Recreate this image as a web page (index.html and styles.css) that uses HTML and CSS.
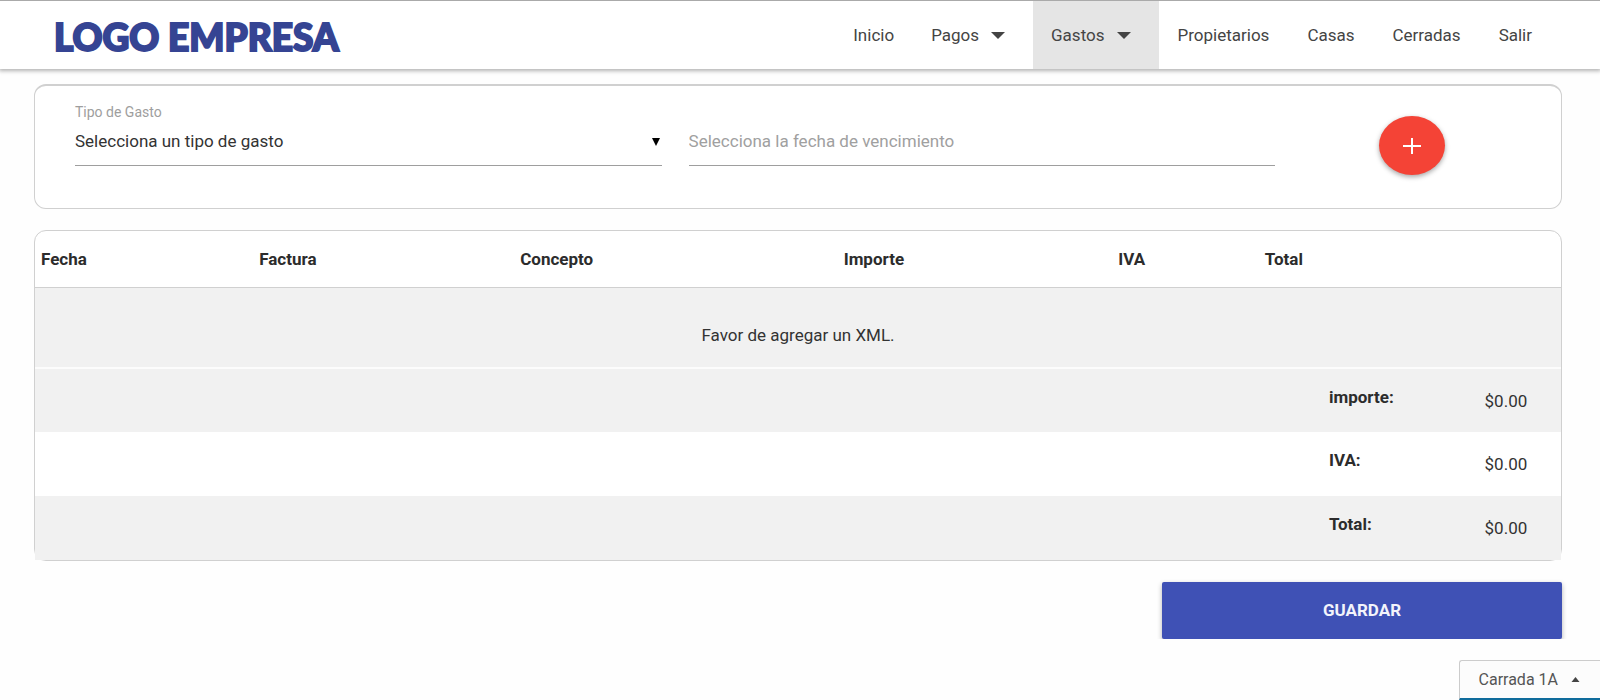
FILE: index.html
```html
<!DOCTYPE html>
<html lang="es">
<head>
<meta charset="utf-8">
<title>Gastos</title>
<link rel="stylesheet" href="styles.css">
</head>
<body>
<header class="navbar">
  <a class="brand" href="#">LOGO EMPRESA</a>
  <nav class="menu">
    <a class="menu-item" href="#">Inicio</a>
    <a class="menu-item dropdown" href="#">Pagos <svg class="caret" viewBox="0 0 14 7"><path d="M0 0h14L7 7z"/></svg></a>
    <a class="menu-item dropdown active" href="#">Gastos <svg class="caret" viewBox="0 0 14 7"><path d="M0 0h14L7 7z"/></svg></a>
    <a class="menu-item" href="#">Propietarios</a>
    <a class="menu-item" href="#">Casas</a>
    <a class="menu-item" href="#">Cerradas</a>
    <a class="menu-item" href="#">Salir</a>
  </nav>
</header>
<main class="content">
  <form class="card filters">
    <div class="field">
      <label class="field-label" for="tipo">Tipo de Gasto</label>
      <div class="select-wrap">
        <select class="control" id="tipo"><option>Selecciona un tipo de gasto</option></select>
        <svg class="select-arrow" viewBox="0 0 8 8"><path d="M0 0h8L4 8z"/></svg>
      </div>
    </div>
    <div class="field">
      <span class="field-label"></span>
      <input class="control" type="text" aria-label="Fecha de vencimiento" placeholder="Selecciona la fecha de vencimiento">
    </div>
    <div class="add">
      <button class="fab" type="button" aria-label="Agregar"><svg class="plus" viewBox="0 0 18 16"><path d="M9 0v16M0 8h18"/></svg></button>
    </div>
  </form>
  <section class="card">
    <table class="expenses">
      <colgroup><col class="c-fecha"><col class="c-factura"><col class="c-concepto"><col class="c-importe"><col class="c-iva"><col class="c-total"><col class="c-label"><col class="c-value"></colgroup>
      <thead>
        <tr><th>Fecha</th><th>Factura</th><th>Concepto</th><th>Importe</th><th>IVA</th><th>Total</th><th></th><th></th></tr>
      </thead>
      <tbody>
        <tr class="empty"><td colspan="8">Favor de agregar un XML.</td></tr>
      </tbody>
      <tfoot>
        <tr class="shade"><td colspan="6"></td><th>importe:</th><td>$0.00</td></tr>
        <tr><td colspan="6"></td><th>IVA:</th><td>$0.00</td></tr>
        <tr class="shade"><td colspan="6"></td><th>Total:</th><td>$0.00</td></tr>
      </tfoot>
    </table>
  </section>
  <div class="actions"><button class="save" type="button">GUARDAR</button></div>
</main>
<button class="dock" type="button">Carrada 1A <svg class="dock-caret" viewBox="0 0 8 5"><path d="M0 5h8L4 0z"/></svg></button>
</body>
</html>
```
FILE: styles.css
```css
* { box-sizing: border-box; }
body {
  margin: 0;
  background: #fefefe;
  color: #333;
  font: 17px/24px Roboto, "Liberation Sans", sans-serif;
}
button, input, select { font: inherit; color: inherit; }
.navbar {
  display: flex;
  align-items: stretch;
  justify-content: space-between;
  height: 69px;
  padding: 0 49px 0 54px;
  background: #fff;
  border-top: 1px solid #aaa;
  box-shadow: 0 1px 4px 1px rgba(0, 0, 0, .3);
}
.brand {
  align-self: center;
  padding-top: 4px;
  color: #354493;
  font: 900 37px/46px Lato, sans-serif;
  -webkit-text-stroke: 2px #354493;
  text-decoration: none;
}
.menu { display: flex; }
.menu-item {
  display: flex;
  align-items: center;
  padding: 0 19px;
  color: #444;
  text-decoration: none;
}
.menu-item.dropdown { padding: 0 18px; }
.menu-item.active { background: #e5e5e5; }
.caret {
  width: 14px;
  height: 7px;
  margin: 0 10px 0 12px;
  fill: #444;
}
.content {
  display: flex;
  flex-direction: column;
  gap: 21px;
  padding: 15px 38px 0 34px;
}
.card {
  background: #fff;
  border: 1px solid #d0d0d0;
  border-radius: 12px;
}
.filters {
  display: flex;
  gap: 27px;
  padding: 16px 0 0 40px;
  border-top-width: 2px;
}
.field { flex: 587; }
.add {
  display: flex;
  flex: 219;
  justify-content: center;
  align-items: flex-start;
  padding: 14px 40px 33px 0;
}
.field-label {
  display: block;
  height: 20px;
  color: #9e9e9e;
  font-size: 14px;
  line-height: 20px;
}
.select-wrap { position: relative; }
.control {
  display: block;
  width: 100%;
  height: 44px;
  padding: 0 0 6px;
  appearance: none;
  background: transparent;
  border: 0;
  border-bottom: 1px solid #9e9e9e;
  border-radius: 0;
  outline: 0;
}
.control::placeholder { color: #a0a0a0; opacity: 1; }
.select-arrow {
  position: absolute;
  top: 16px;
  right: 2px;
  width: 8px;
  height: 8px;
}
.fab {
  display: flex;
  align-items: center;
  justify-content: center;
  width: 66px;
  height: 59px;
  border: 0;
  border-radius: 50%;
  background: #f44336;
  box-shadow: 0 2px 5px rgba(0, 0, 0, .35);
}
.plus {
  width: 18px;
  height: 16px;
  fill: none;
  stroke: #fff;
  stroke-width: 2;
}
.expenses {
  width: 100%;
  table-layout: fixed;
  border-collapse: collapse;
}
.c-fecha { width: 14.3%; }
.c-factura { width: 17.1%; }
.c-concepto { width: 21.2%; }
.c-importe { width: 18%; }
.c-iva { width: 9.6%; }
.c-total { width: 4.2%; }
.c-label { width: 10.2%; }
.c-value { width: 5.4%; }
th, td {
  padding: 0 6px;
  text-align: left;
  white-space: nowrap;
}
th { font-weight: 700; color: #2c2c2c; }
thead th {
  height: 56px;
  border-bottom: 1px solid #d0d0d0;
}
.empty td {
  height: 81px;
  padding-top: 16px;
  background: #f1f1f1;
  border-bottom: 2px solid #fcfcfc;
  text-align: center;
}
tfoot th, tfoot td { height: 64px; }
tfoot th { padding-bottom: 8px; }
.shade { background: #f1f1f1; }
.actions { display: flex; justify-content: flex-end; }
.save {
  width: 400px;
  height: 57px;
  padding-bottom: 3px;
  border: 0;
  border-radius: 2px;
  background: #3f51b5;
  color: #f3f4fb;
  font-weight: 700;
  box-shadow: 0 2px 5px rgba(0, 0, 0, .3);
}
.dock {
  position: fixed;
  right: 0;
  bottom: 0;
  display: flex;
  align-items: center;
  gap: 13px;
  height: 40px;
  padding: 0 20px 0 19px;
  background: #fcfcfc;
  border: 1px solid #ccc;
  border-right: 0;
  border-bottom: 2px solid #0f6c9c;
  border-radius: 3px 0 0 0;
  color: #555;
  font-size: 16px;
}
.dock-caret { width: 9px; height: 5px; fill: #444; }
```
